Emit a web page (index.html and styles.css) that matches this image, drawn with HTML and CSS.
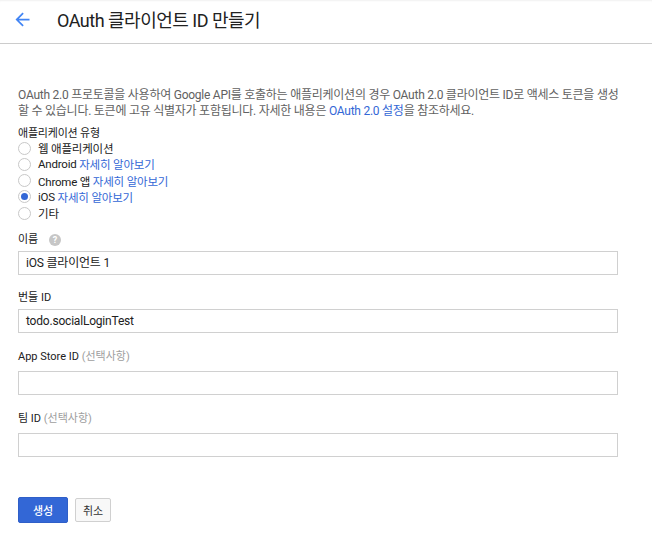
FILE: index.html
```html
<!DOCTYPE html>
<html lang="ko">
<head>
<meta charset="utf-8">
<title>OAuth 클라이언트 ID 만들기</title>
<link rel="stylesheet" href="styles.css">
</head>
<body>
<header class="topbar">
  <svg class="back" width="21" height="21" viewBox="0 0 24 24"><path d="M20 11H7.83l5.59-5.59L12 4l-8 8 8 8 1.41-1.41L7.83 13H20v-2z" fill="#4285f4"/></svg>
  <h1 class="title">OAuth 클라이언트 ID 만들기</h1>
</header>
<main class="content">
  <p class="intro">OAuth 2.0 프로토콜을 사용하여 Google API를 호출하는 애플리케이션의 경우 OAuth 2.0 클라이언트 ID로 액세스 토큰을 생성<br>할 수 있습니다. 토큰에 고유 식별자가 포함됩니다. 자세한 내용은 <a class="link" href="#">OAuth 2.0 설정</a>을 참조하세요.</p>
  <div class="group">
    <div class="group-label">애플리케이션 유형</div>
    <label class="radio"><span class="dot"></span>웹 애플리케이션</label>
    <label class="radio"><span class="dot"></span>Android <a class="link" href="#">자세히 알아보기</a></label>
    <label class="radio"><span class="dot"></span>Chrome 앱 <a class="link" href="#">자세히 알아보기</a></label>
    <label class="radio"><span class="dot checked"></span>iOS <a class="link" href="#">자세히 알아보기</a></label>
    <label class="radio"><span class="dot"></span>기타</label>
  </div>
  <div class="field f1">
    <div class="label">이름 <span class="help">?</span></div>
    <div class="input">iOS 클라이언트 1</div>
  </div>
  <div class="field f2">
    <div class="label">번들 ID</div>
    <div class="input">todo.socialLoginTest</div>
  </div>
  <div class="field f3">
    <div class="label">App Store ID <span class="opt">(선택사항)</span></div>
    <div class="input"></div>
  </div>
  <div class="field f4">
    <div class="label">팀 ID <span class="opt">(선택사항)</span></div>
    <div class="input"></div>
  </div>
  <div class="actions">
    <button class="btn primary">생성</button>
    <button class="btn">취소</button>
  </div>
</main>
</body>
</html>
```

FILE: styles.css
```css
* { box-sizing: border-box; }
html, body { margin: 0; padding: 0; background: #fff; }
body {
  font-family: Roboto, "Noto Sans CJK KR", sans-serif;
  color: #212121;
  font-size: 13px;
}
.topbar {
  height: 44px;
  border-bottom: 1px solid #cccccc;
  display: flex;
  align-items: center;
  padding-left: 12px;
  box-shadow: inset 0 2px 2px -1px rgba(0,0,0,0.06);
}
.back { display: block; margin-top: -5px; }
.title {
  margin: -5px 0 0 24px;
  font-size: 18px;
  font-weight: 400;
  letter-spacing: -0.5px;
  color: #212121;
}
.content { padding: 0 20px 0 18px; }
.intro {
  margin: 43px 0 0;
  font-size: 12px;
  line-height: 16px;
  letter-spacing: -0.25px;
  color: #616161;
}
.link { color: #3367d6; text-decoration: none; }
.group { margin-top: 8px; }
.group-label { font-size: 11px; line-height: 13px; color: #212121; letter-spacing: -0.2px; }
.radio {
  display: flex;
  align-items: center;
  height: 16.25px;
  font-size: 11.5px;
  letter-spacing: -0.2px;
  color: #212121;
  white-space: pre;
}
.dot {
  width: 13px; height: 13px;
  border: 1px solid #c8c8c8;
  border-radius: 50%;
  margin-right: 7px;
  position: relative;
  flex: none;
}
.dot.checked::after {
  content: "";
  position: absolute;
  left: 2px; top: 2px;
  width: 7px; height: 7px;
  border-radius: 50%;
  background: #3367d6;
}
.field { margin-top: 15px; }
.f1 { margin-top: 11px; }
.f3, .f4 { margin-top: 16px; }
.label {
  font-size: 11px;
  line-height: 16px;
  color: #212121;
  display: flex;
  align-items: center;
  white-space: pre;
}
.help {
  display: inline-flex;
  align-items: center;
  justify-content: center;
  width: 12px; height: 12px;
  border-radius: 50%;
  background: #c6c6c6;
  color: #fff;
  font-size: 9px;
  font-weight: 700;
  margin-left: 8px;
}
.opt { color: #9e9e9e; }
.input {
  margin-top: 3px;
  width: 600px;
  height: 24px;
  border: 1px solid #d0d0d0;
  padding: 0 7px;
  font-size: 12px;
  letter-spacing: -0.2px;
  line-height: 22px;
  color: #212121;
}
.f3 .input, .f4 .input { margin-top: 6px; }
.actions { margin-top: 40px; display: flex; gap: 7px; align-items: center; }
.btn {
  font-family: Roboto, "Noto Sans CJK KR", sans-serif;
  font-size: 11px;
  height: 24px;
  padding: 0 7px;
  background: #f8f8f8;
  border: 1px solid #d0d0d0;
  border-radius: 2px;
  color: #333;
}
.btn.primary {
  background: #3367d6;
  border-color: #2f5fc8;
  color: #fff;
  width: 50px;
  height: 26px;
  font-weight: 500;
}
```
